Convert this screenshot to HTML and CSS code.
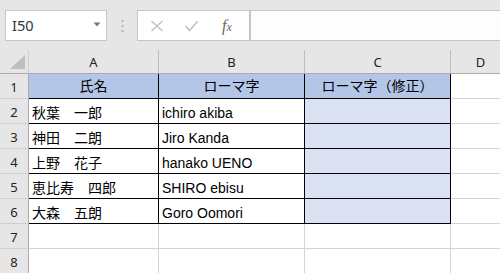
FILE: index.html
```html
<!DOCTYPE html>
<html lang="ja">
<head>
<meta charset="utf-8">
<link rel="stylesheet" href="styles.css">
</head>
<body>
<div class="app">
  <div class="toolbar">
    <div class="namebox">
      <span class="ref">I50</span>
      <svg class="caret" width="8" height="5" viewBox="0 0 8 5"><polygon points="0.5,0.5 7.5,0.5 4,4.5" fill="#7a7a7a"/></svg>
    </div>
    <div class="sep">
      <svg width="3" height="12" viewBox="0 0 3 12"><rect x="0.5" y="0" width="2" height="2" fill="#b3b3b3"/><rect x="0.5" y="5" width="2" height="2" fill="#b3b3b3"/><rect x="0.5" y="10" width="2" height="2" fill="#b3b3b3"/></svg>
    </div>
    <div class="fxbox">
      <svg class="ico" width="14" height="12" viewBox="0 0 14 12"><path d="M1.5 1 L12.5 11 M12.5 1 L1.5 11" stroke="#c3c3c3" stroke-width="1.6" fill="none"/></svg>
      <svg class="ico" width="15" height="12" viewBox="0 0 15 12"><path d="M1.5 6 L5.5 10.5 L13.5 1.5" stroke="#c3c3c3" stroke-width="1.8" fill="none"/></svg>
      <span class="fx">f<span class="fxx">x</span></span>
    </div>
    <div class="formula"></div>
  </div>
  <div class="sheet">
    <div class="corner"><svg width="29" height="23" viewBox="0 0 29 23"><polygon points="10,19 25,5 25,19" fill="#bfbfbf"/></svg></div>
    <div class="ch">A</div>
    <div class="ch">B</div>
    <div class="ch">C</div>
    <div class="ch">D</div>

    <div class="rh">1</div>
    <div class="c t hd">氏名</div>
    <div class="c t hd">ローマ字</div>
    <div class="c t hd">ローマ字（修正）</div>
    <div class="c"></div>

    <div class="rh">2</div>
    <div class="c t">秋葉　一郎</div>
    <div class="c t">ichiro akiba</div>
    <div class="c t fill"></div>
    <div class="c"></div>

    <div class="rh">3</div>
    <div class="c t">神田　二朗</div>
    <div class="c t">Jiro Kanda</div>
    <div class="c t fill"></div>
    <div class="c"></div>

    <div class="rh">4</div>
    <div class="c t">上野　花子</div>
    <div class="c t">hanako UENO</div>
    <div class="c t fill"></div>
    <div class="c"></div>

    <div class="rh">5</div>
    <div class="c t">恵比寿　四郎</div>
    <div class="c t">SHIRO ebisu</div>
    <div class="c t fill"></div>
    <div class="c"></div>

    <div class="rh">6</div>
    <div class="c t">大森　五朗</div>
    <div class="c t">Goro Oomori</div>
    <div class="c t fill"></div>
    <div class="c"></div>

    <div class="rh">7</div>
    <div class="c"></div>
    <div class="c"></div>
    <div class="c"></div>
    <div class="c"></div>

    <div class="rh">8</div>
    <div class="c"></div>
    <div class="c"></div>
    <div class="c"></div>
    <div class="c"></div>
  </div>
</div>
</body>
</html>
```

FILE: styles.css
```css
* { box-sizing: border-box; }
html, body { margin: 0; padding: 0; }
body { width: 500px; height: 273px; overflow: hidden; background: #e6e6e6; }

.app { width: 500px; height: 273px; overflow: hidden; background: #e6e6e6; }

.toolbar {
  height: 50px;
  padding: 10px 0 0 5px;
  display: flex;
  align-items: flex-start;
}
.toolbar > * { flex: none; }

.namebox {
  width: 102px;
  height: 31px;
  background: #fff;
  border: 1px solid #c6c6c6;
  display: flex;
  align-items: center;
  justify-content: space-between;
  padding: 0 5px 1px 6px;
}
.ref {
  font-family: "Noto Sans", "Liberation Sans", sans-serif;
  font-size: 14.5px;
  color: #333;
  line-height: 1;
}
.caret { margin-top: -2px; }

.sep {
  width: 30px;
  height: 31px;
  display: flex;
  align-items: center;
  justify-content: center;
  padding-left: 1px;
}

.fxbox {
  width: 113px;
  height: 31px;
  background: #fff;
  border: 1px solid #c6c6c6;
  display: flex;
  align-items: center;
  padding: 0 0 0 12px;
  gap: 20px;
}
.ico { flex: none; }
.fx {
  font-family: "Liberation Serif", "DejaVu Serif", serif;
  font-style: italic;
  font-size: 16px;
  color: #666;
  margin-left: 3px;
  line-height: 1;
}
.fxx { font-size: 12px; }

.formula {
  width: 260px;
  height: 31px;
  background: #fdfdfd;
  border: 1px solid #c6c6c6;
}

.sheet {
  display: grid;
  grid-template-columns: 29px 130px 146px 146px 60px;
  grid-template-rows: 24px repeat(8, 25px);
}

.corner, .ch, .rh, .c {
  font-family: "Liberation Sans", "Noto Sans CJK JP", sans-serif;
  color: #000;
  white-space: nowrap;
  overflow: hidden;
}

.corner {
  background: #e6e6e6;
  border-right: 1px solid #d0d0d0;
  border-bottom: 1px solid #ababab;
}
.corner svg { display: block; }

.ch {
  background: #e6e6e6;
  border-right: 1px solid #bdbdbd;
  border-bottom: 1px solid #ababab;
  display: flex;
  align-items: center;
  justify-content: center;
  font-family: "Noto Sans", "Liberation Sans", sans-serif;
  font-size: 13px;
  color: #222;
  padding-top: 1px;
}

.rh {
  background: #e6e6e6;
  border-right: 1px solid #ababab;
  border-bottom: 1px solid #cfcfcf;
  display: flex;
  align-items: center;
  justify-content: center;
  font-family: "Noto Sans", "Liberation Sans", sans-serif;
  font-size: 13px;
  color: #222;
  padding-top: 2px;
}

.c {
  background: #fff;
  border-right: 1px solid #d4d4d4;
  border-bottom: 1px solid #d4d4d4;
  display: flex;
  align-items: center;
  padding: 3px 0 0 3px;
  font-size: 14px;
  line-height: 18px;
}

.t {
  border-right-color: #000;
  border-bottom-color: #000;
}

.hd {
  background: #b4c6e7;
  justify-content: center;
  padding: 0;
}

.fill { background: #d9e1f2; }
```
